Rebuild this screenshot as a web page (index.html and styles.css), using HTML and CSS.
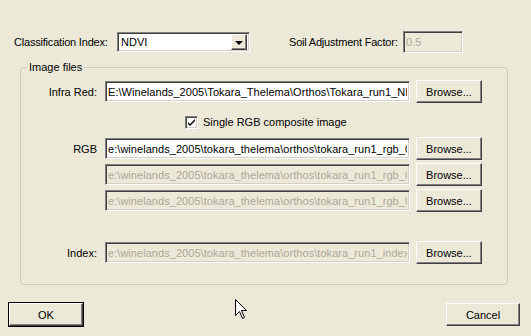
FILE: index.html
```html
<!DOCTYPE html>
<html lang="en">

<head>
    <meta charset="UTF-8">
    <meta name="viewport" content="width=device-width, initial-scale=1.0">
    <title>Vegetation Index</title>
    <link rel="stylesheet" href="styles.css">
</head>

<body>

    <div id="dialog">
        <div class="top_row">
            <label class="top_label">Classification Index:</label>
            <div class="combo">
                <span class="combo_text">NDVI</span>
                <span class="combo_btn"><span class="arrow"></span></span>
            </div>
            <label class="soil_label">Soil Adjustment Factor:</label>
            <input type="text" class="field soil" value="0.5" disabled>
        </div>

        <fieldset class="group">
            <legend>Image files</legend>

            <div class="file_row first">
                <label>Infra Red:</label>
                <input type="text" class="field" value="E:\Winelands_2005\Tokara_Thelema\Orthos\Tokara_run1_NIR.tif">
                <button class="btn">Browse...</button>
            </div>

            <div class="check_row">
                <span class="check_box">
                    <svg width="9" height="9" viewBox="0 0 9 9"><path d="M1 4 L3 6 L8 1 L8 3 L3 8 L1 6 Z" fill="#000"/></svg>
                </span>
                <span>Single RGB composite image</span>
            </div>

            <div class="file_row rgb">
                <label>RGB</label>
                <input type="text" class="field" value="e:\winelands_2005\tokara_thelema\orthos\tokara_run1_rgb_0.tif">
                <button class="btn">Browse...</button>
            </div>
            <div class="file_row">
                <label></label>
                <input type="text" class="field" value="e:\winelands_2005\tokara_thelema\orthos\tokara_run1_rgb_0.tif" disabled>
                <button class="btn">Browse...</button>
            </div>
            <div class="file_row">
                <label></label>
                <input type="text" class="field" value="e:\winelands_2005\tokara_thelema\orthos\tokara_run1_rgb_0.tif" disabled>
                <button class="btn">Browse...</button>
            </div>

            <div class="file_row index_row">
                <label>Index:</label>
                <input type="text" class="field" value="e:\winelands_2005\tokara_thelema\orthos\tokara_run1_index.tif" disabled>
                <button class="btn">Browse...</button>
            </div>
        </fieldset>

        <div class="bottom_row">
            <button class="btn big default">OK</button>
            <button class="btn big">Cancel</button>
        </div>

        <!-- mouse pointer -->
        <svg class="cursor" width="13" height="21" viewBox="0 0 13 21">
            <path d="M0.5 0.5 L0.5 16.5 L4.5 12.5 L7.5 19.5 L9.5 18.5 L6.5 11.5 L11.5 11.5 Z" fill="#fff" stroke="#000" stroke-width="1"/>
        </svg>
    </div>

</body>

</html>
```

FILE: styles.css
```css
*{
    box-sizing: border-box;
}

body{
    margin: 0;
    background-color: #ece9d8;
    font-family: "Liberation Sans", Arial, sans-serif;
    font-size: 11px;
    color: #000;
}

#dialog{
    position: relative;
    width: 531px;
    height: 336px;
    padding-top: 31px;
}

label{
    white-space: nowrap;
}

/* top line */
.top_row{
    display: flex;
    align-items: center;
    height: 22px;
    padding-left: 14px;
}

.top_label{
    width: 103px;
    letter-spacing: -0.2px;
}

.combo{
    display: flex;
    align-items: center;
    width: 133px;
    height: 20px;
    background: #fff;
    border: 1px solid;
    border-color: #808080 #fff #fff #808080;
    box-shadow: inset 1px 1px #404040, inset -1px -1px #d4d0c8;
    padding: 2px;
}

.combo_text{
    flex: 1;
    padding-left: 1px;
}

.combo_btn{
    display: flex;
    align-items: center;
    justify-content: center;
    width: 16px;
    height: 16px;
    background: #ece9d8;
    border: 1px solid;
    border-color: #fff #404040 #404040 #fff;
    box-shadow: inset -1px -1px #808080;
}

.arrow{
    width: 0;
    height: 0;
    border-left: 4px solid transparent;
    border-right: 4px solid transparent;
    border-top: 4px solid #000;
    margin-top: 1px;
}

.soil_label{
    margin-left: 39px;
    width: 114px;
    letter-spacing: -0.2px;
}

.field{
    height: 21px;
    margin: 0;
    padding: 0 2px;
    font-family: inherit;
    font-size: 11px;
    color: #000;
    background: #fff;
    border: 1px solid;
    border-color: #808080 #fff #fff #808080;
    box-shadow: inset 1px 1px #404040, inset -1px -1px #d4d0c8;
    outline: none;
    letter-spacing: 0.05px;
}

.field:disabled{
    background: #ece9d8;
    color: #aca899;
}

.soil{
    width: 60px;
    height: 22px;
}

/* group box */
.group{
    margin: 8px 0 0 20px;
    width: 488px;
    height: 224px;
    padding: 0;
    border: 1px solid #d0d0bf;
    border-radius: 3px;
}

.group legend{
    margin-left: 6px;
    padding: 0 2px;
    line-height: 13px;
}

.file_row{
    display: grid;
    grid-template-columns: 77px 306px 66px;
    column-gap: 6px;
    align-items: center;
    height: 23px;
    margin-top: 3px;
}

.file_row label{
    text-align: right;
    margin-right: 1px;
}

.file_row .field{
    margin-left: 1px;
}

.file_row.first{
    margin-top: 6px;
}

.file_row.rgb{
    margin-top: 8px;
}

.file_row.index_row{
    margin-top: 29px;
}

.check_row{
    display: flex;
    align-items: center;
    gap: 5px;
    height: 14px;
    margin-top: 12px;
    padding-left: 164px;
}

.check_box{
    display: flex;
    align-items: center;
    justify-content: center;
    width: 13px;
    height: 13px;
    background: #fff;
    border: 1px solid;
    border-color: #808080 #fff #fff #808080;
    box-shadow: inset 1px 1px #404040, inset -1px -1px #d4d0c8;
}

.btn{
    height: 23px;
    margin: 0;
    padding: 0;
    font-family: inherit;
    font-size: 11px;
    color: #000;
    background: #ece9d8;
    border: 1px solid;
    border-color: #fff #404040 #404040 #fff;
    box-shadow: inset -1px -1px #808080;
}

/* OK / Cancel */
.bottom_row{
    display: flex;
    justify-content: space-between;
    padding: 0 11px 0 9px;
    margin-top: 18px;
}

.big{
    width: 74px;
    height: 23px;
}

.default{
    outline: 1px solid #000;
    outline-offset: 0;
}

.cursor{
    position: absolute;
    left: 235px;
    top: 299px;
}
```
